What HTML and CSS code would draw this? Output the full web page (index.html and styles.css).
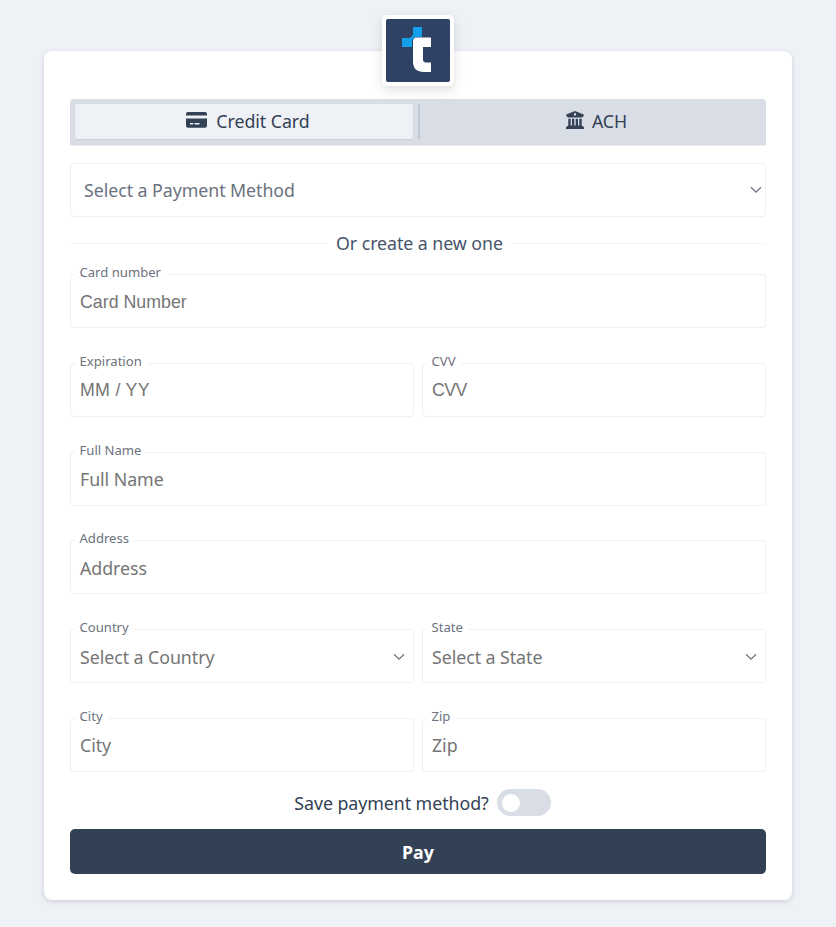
FILE: index.html
```html
<!DOCTYPE html>
<html lang="en">
<head>
<meta charset="utf-8">
<title>Payment</title>
<link rel="stylesheet" href="styles.css">
</head>
<body>
<main class="card">
  <div class="logo">
    <svg width="64" height="63" viewBox="0 0 64 63">
      <rect width="64" height="63" rx="2" fill="#2f4164"/>
      <path d="M27 8h9v10h-7l-3 3v7h-10v-9h8l3-3z" fill="#139fe9"/>
      <path d="M29 18.500h16v9.500h-8v12.500q0 3 3 3h5v9.500h-7q-11 0-11-10.500v-21.500z" fill="#fff"/>
    </svg>
  </div>
  <div class="tabs">
    <div class="tab tab-active">
      <svg class="card-icon" width="21" height="16" viewBox="0 0 21 16"><path d="M2 0h17q2 0 2 2v1.500h-21v-1.500q0-2 2-2zM0 6.500h21v7q0 2.300-2 2.300h-17q-2 0-2-2.300zM4 11v1.600h3.300v-1.600zM8.500 11v1.600h5v-1.600z" fill="#334155" fill-rule="evenodd"/></svg>
      <span>Credit Card</span>
    </div>
    <div class="divider"></div>
    <div class="tab">
      <svg class="bank-icon" width="18" height="18" viewBox="0 0 18 18"><path d="M9 0l8.700 3.600v1.400l-1.700 1.500h-14l-1.700-1.500v-1.400zM9 2.200a1.100 1.100 0 1 0 .01 0zM2.300 7.800h2.400v6.700h1.300v-6.700h2.300v6.700h1.400v-6.700h2.300v6.700h1.300v-6.700h2.400v6.700l1.300 1h-16l1.300-1zM.8 15.200h16.400l.8 1.300v1.500h-18v-1.500z" fill="#334155"/><circle cx="9" cy="3.400" r="1.100" fill="#d9dee6"/></svg>
      <span>ACH</span>
    </div>
  </div>
  <div class="box method">
    <span>Select a Payment Method</span>
    <svg class="chevron" width="12" height="8" viewBox="0 0 12 8"><path d="M1 1.200l5 5 5-5"/></svg>
  </div>
  <div class="or">Or create a new one</div>
  <form class="fields">
    <div class="box wide"><label>Card number</label><span class="system">Card Number</span></div>
    <div class="box"><label>Expiration</label><span class="system date">MM / YY</span></div>
    <div class="box"><label>CVV</label><span class="system code">CVV</span></div>
    <div class="box wide"><label>Full Name</label><span>Full Name</span></div>
    <div class="box wide"><label>Address</label><span>Address</span></div>
    <div class="box"><label>Country</label><span>Select a Country</span><svg class="chevron" width="12" height="8" viewBox="0 0 12 8"><path d="M1 1.200l5 5 5-5"/></svg></div>
    <div class="box"><label>State</label><span>Select a State</span><svg class="chevron" width="12" height="8" viewBox="0 0 12 8"><path d="M1 1.200l5 5 5-5"/></svg></div>
    <div class="box"><label>City</label><span>City</span></div>
    <div class="box"><label>Zip</label><span>Zip</span></div>
  </form>
  <div class="save"><span>Save payment method?</span><div class="toggle"><div class="knob"></div></div></div>
  <button class="pay" type="button">Pay</button>
</main>
</body>
</html>
```
FILE: styles.css
```css
* { box-sizing: border-box; }
body {
  margin: 0;
  height: 927px;
  padding: 51px 44px 0;
  background: #eef1f6;
  color: #334155;
  font: 17.8px/26px "Noto Sans", sans-serif;
  letter-spacing: -.06px;
  overflow: hidden;
}
.card {
  position: relative;
  display: flex;
  flex-direction: column;
  width: 748px;
  height: 849px;
  padding: 48px 26px 0;
  background: #fff;
  border-radius: 8px;
  box-shadow: 0 1px 4px rgba(30, 41, 59, .12), 0 3px 8px rgba(30, 41, 59, .05);
}
.logo {
  position: absolute;
  left: 338px;
  top: -36px;
  display: flex;
  padding: 4px;
  background: #fff;
  border-radius: 5px;
  box-shadow: 0 5px 14px rgba(0, 0, 0, .1), 0 2px 4px rgba(0, 0, 0, .04);
}
.tabs {
  display: flex;
  height: 46px;
  padding: 5px 4px 6px 5px;
  background: #d9dee6;
  border-radius: 4px 4px 0 0;
  box-shadow: 0 1px 0 #eceff3;
}
.tab {
  display: flex;
  flex: 1;
  align-items: center;
  justify-content: center;
  border-radius: 2px;
}
.tab span { margin-top: -2px; }
.tab-active { flex: 0 0 338px; background: #eef1f6; box-shadow: 0 1px 2px #c5cedb; }
.card-icon { margin: -3px 9px 0 8px; }
.bank-icon { margin: -3px 8px 0 11px; }
.divider { width: 2px; margin-left: 5px; background: #bfc5d2; }
.box {
  position: relative;
  display: flex;
  align-items: center;
  justify-content: space-between;
  height: 54px;
  padding: 0 8px 0 9px;
  border: 1px solid #f0f1f3;
  border-radius: 3px;
  color: #757575;
}
.fields .box { padding-top: 1px; }
.method { margin-top: 18px; padding: 0 3px 0 13px; color: #6b7280; }
.chevron { fill: none; stroke: currentColor; stroke-width: 1.3; }
.or { display: flex; align-items: center; gap: 8px; height: 26px; margin-top: 13px; color: #475569; }
.or::before, .or::after { content: ""; flex: 0 0 254px; height: 1px; background: #f3f4f6; }
.or::before { flex-basis: 258px; }
.fields {
  display: grid;
  grid-template-columns: 1fr 1fr;
  gap: 34.8px 8px;
  margin: 18px 0 0;
}
.wide { grid-column: span 2; }
.box label {
  position: absolute;
  left: 4px;
  top: -12px;
  padding: 0 5px 0 4.5px;
  background: #fff;
  color: #6b7280;
  font-size: 13.1px;
  letter-spacing: 0;
  line-height: 18px;
}
.system { font-family: "Liberation Sans", sans-serif; letter-spacing: 0; }
.date { letter-spacing: .3px; }
.code { letter-spacing: -.6px; }
.save { display: flex; align-items: center; justify-content: center; gap: 8px; height: 28px; margin: 17px 0 12px 9px; }
.toggle { display: flex; align-items: center; width: 54px; height: 27px; padding: 0 5px; border-radius: 14px; background: #d9dee6; }
.knob { width: 18px; height: 18px; border-radius: 50%; background: #fff; }
.pay {
  height: 45px;
  padding: 2px 0 0;
  border: 0;
  border-radius: 5px;
  background: #334155;
  color: #fff;
  font: 700 17.8px/43px "Noto Sans", sans-serif;
}
```
